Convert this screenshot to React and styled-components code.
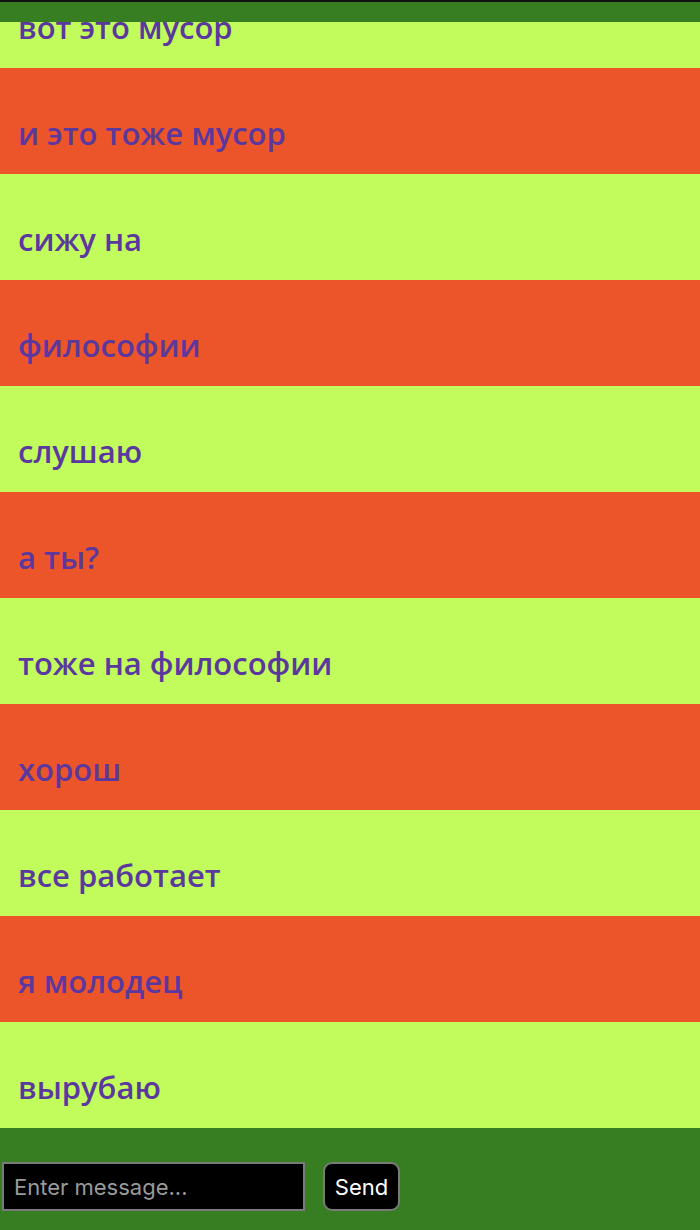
import React from "react";
import styled, { createGlobalStyle } from "styled-components";

const Global = createGlobalStyle`
  html, body { margin: 0; padding: 0; height: 100%; }
  body { background: #377e22; }
  #root { height: 100%; }
`;

const Page = styled.div`
  height: 1230px;
  display: flex;
  flex-direction: column;
  background: #377e22;
`;

const TopBar = styled.div`
  flex: 0 0 20px;
  border-top: 2px solid #111;
  background: #377e22;
`;

const Feed = styled.div`
  flex: 1 1 auto;
  min-height: 0;
  overflow: hidden;
  display: flex;
  flex-direction: column;
  justify-content: flex-end;
`;

const Message = styled.div`
  flex: 0 0 106px;
  box-sizing: border-box;
  padding: 45px 18px 0;
  background: ${(p) => (p.$odd ? "#ec5529" : "#c1fc5c")};
  color: #5b389e;
  font-family: "Comic Sans MS", "Open Sans", sans-serif;
  font-weight: 600;
  font-size: 31px;
  line-height: 40px;
  white-space: nowrap;
`;

const Footer = styled.div`
  flex: 0 0 102px;
  box-sizing: border-box;
  display: flex;
  align-items: flex-start;
  gap: 18px;
  padding: 34px 2px 0;
  background: #377e22;
`;

const Input = styled.input`
  box-sizing: border-box;
  width: 303px;
  height: 49px;
  margin: 0;
  background: #000;
  border: 2px solid #7a7a7a;
  color: #fff;
  padding: 0 10px;
  font-family: Inter, "Liberation Sans", sans-serif;
  font-size: 22px;
  outline: none;
  &::placeholder { color: #9a9a9a; }
`;

const SendButton = styled.button`
  box-sizing: border-box;
  width: 77px;
  height: 49px;
  margin: 0;
  background: #000;
  border: 2px solid #7a7a7a;
  border-radius: 9px;
  color: #fff;
  font-family: Inter, "Liberation Sans", sans-serif;
  font-size: 22px;
  padding: 0;
`;

const messages = [
  "вот это мусор",
  "и это тоже мусор",
  "сижу на",
  "философии",
  "слушаю",
  "а ты?",
  "тоже на философии",
  "хорош",
  "все работает",
  "я молодец",
  "вырубаю",
];

export default function App() {
  return (
    <Page>
      <Global />
      <TopBar />
      <Feed>
        {messages.map((m, i) => (
          <Message key={i} $odd={i % 2 === 1}>
            {m}
          </Message>
        ))}
      </Feed>
      <Footer>
        <Input placeholder="Enter message..." />
        <SendButton>Send</SendButton>
      </Footer>
    </Page>
  );
}
